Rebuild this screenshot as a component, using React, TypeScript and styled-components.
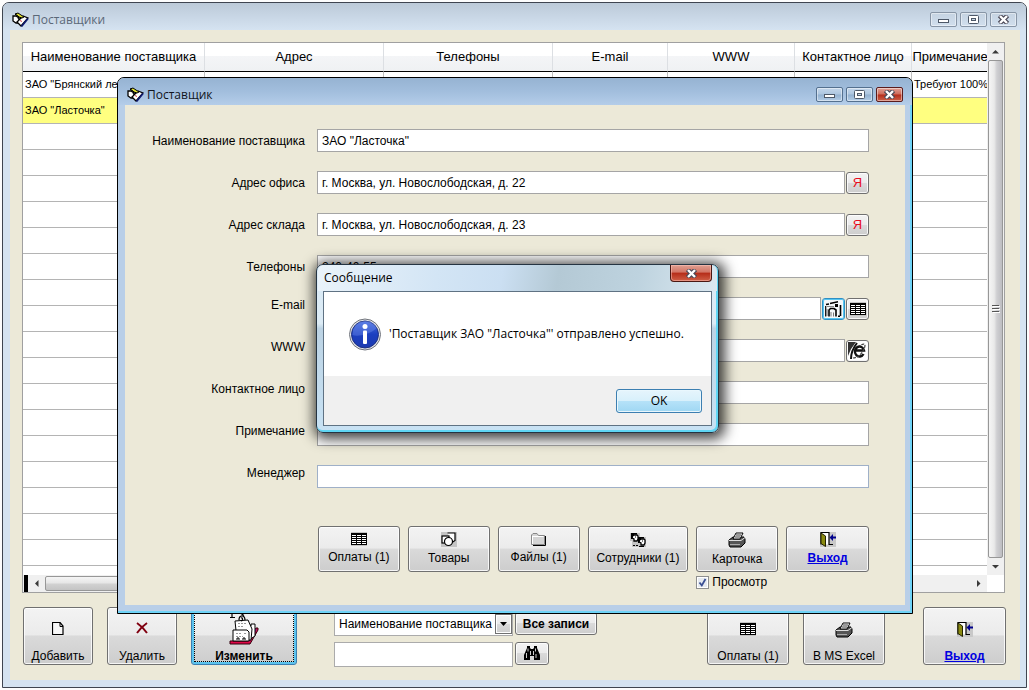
import React from "react";
import styled, { createGlobalStyle, css } from "styled-components";

const sans = `"Liberation Sans", Arial, sans-serif`;
const ui = `"Open Sans", "Noto Sans", sans-serif`;
const beige = "#ece9d8";

const GlobalStyle = createGlobalStyle`
  * { box-sizing: border-box; }
  body { margin: 0; background: #fdfdfd; font: 12px/16px ${sans}; color: #000; }
  button, input, select { font: inherit; color: inherit; margin: 0; }
  svg { display: block; flex: none; }
`;

const Desktop = styled.div`
  position: relative;
  padding: 2px;
`;

const MainWindow = styled.main`
  border: 1px solid #3f4550;
  border-radius: 7px 7px 0 0;
  background: #d5e3f1;
  padding: 0 6px 7px 7px;
`;

const TitleBar = styled.header<{ $active?: boolean }>`
  display: flex;
  align-items: center;
  gap: 3px;
  height: 27px;
  margin: 0 -6px 0 -7px;
  padding: 6px 9px 0 9px;
  border-radius: 6px 6px 0 0;
  background: ${(p) =>
    p.$active
      ? "linear-gradient(#96b3d2, #a2bedd 50%, #b4cde9)"
      : "linear-gradient(#bccad8, #c8d6e5 50%, #d5e3f1)"};
  color: ${(p) => (p.$active ? "#10141c" : "#5b6878")};
`;

const Title = styled.h1`
  flex: 1;
  margin: 0;
  font: 12px/16px ${ui};
`;

const Captions = styled.div`
  display: flex;
  gap: 3px;
`;

const CaptionButton = styled.button<{ $danger?: boolean; $active?: boolean }>`
  display: flex;
  align-items: center;
  justify-content: center;
  width: 27px;
  height: 15px;
  padding: 0;
  border: 1px solid ${(p) => (p.$danger ? "#5a1c1c" : p.$active ? "#54708f" : "#8795a6")};
  border-radius: 2px;
  box-shadow: inset 0 0 0 1px rgba(255, 255, 255, 0.45);
  background: ${(p) =>
    p.$danger
      ? "linear-gradient(#dfa297, #cf6a59 48%, #b42d1b 52%, #cc6149)"
      : p.$active
        ? "linear-gradient(#c3d6ea, #adc6e0 48%, #93b1d0 52%, #b3cce6)"
        : "transparent"};
`;

const MainClient = styled.div`
  background: ${beige};
  padding: 12px 15px 13px 12px;
`;

const GridFrame = styled.section`
  display: grid;
  grid-template-columns: minmax(0, 1fr) 17px;
  grid-template-rows: 532px 17px;
  border: 1px solid #a0a0a0;
  background: #fff;
`;

const Table = styled.table`
  width: 100%;
  table-layout: fixed;
  border-collapse: separate;
  border-spacing: 0;
`;

const HeadCell = styled.th`
  height: 29px;
  padding: 0;
  border-right: 1px solid #dcdfe3;
  border-bottom: 1px solid #000;
  background: linear-gradient(#fff 45%, #f4f5f7 46%, #eff1f3);
  font: 13px/16px ${sans};
  white-space: nowrap;
  &:last-child { border-right: 0; }
`;

const Cell = styled.td`
  height: 26px;
  padding: 0 0 2px 2px;
  border-right: 1px solid #c0c0c0;
  border-bottom: 1px solid #b4b4b4;
  font-size: 11px;
  overflow: hidden;
  white-space: nowrap;
  &:last-child { border-right: 0; }
`;

const Row = styled.tr<{ $selected?: boolean }>`
  background: ${(p) => (p.$selected ? "#ffff80" : "#fff")};
  &:last-child td { border-bottom: 0; height: 9px; }
`;

const ScrollBar = styled.div<{ $horizontal?: boolean }>`
  display: flex;
  flex-direction: ${(p) => (p.$horizontal ? "row" : "column")};
  background: #f0f0f0;
`;

const ScrollArrow = styled.button`
  display: flex;
  align-items: center;
  justify-content: center;
  width: 17px;
  height: 17px;
  padding: 0;
  border: 0;
  background: transparent;
`;

const ScrollThumb = styled.div<{ $horizontal?: boolean }>`
  flex: 1;
  display: flex;
  align-items: center;
  justify-content: center;
  border: 1px solid #979797;
  border-radius: 2px;
  margin: ${(p) => (p.$horizontal ? "1px 0" : "0 1px")};
  background: ${(p) =>
    p.$horizontal
      ? "linear-gradient(#f5f5f5, #e6e6e6 48%, #d2d2d2 52%, #c4c4c4)"
      : "linear-gradient(90deg, #f5f5f5, #e9e9e9 40%, #cfcfd2 60%, #bdbdc1)"};
`;

const ScrollTail = styled.div`
  width: 80px;
`;

const Splitter = styled.div`
  width: 4px;
  margin-left: 1px;
  background: #000;
`;

const buttonFace = css`
  border: 1px solid #707070;
  border-radius: 3px;
  box-shadow: inset 0 0 0 1px rgba(255, 255, 255, 0.8);
  background: linear-gradient(#f3f3f3, #ebebeb 48%, #dadada 50%, #cdcdcd);
`;

const Toolbar = styled.div`
  display: flex;
  align-items: flex-start;
  gap: 14px;
  margin: 14px -1px 0 1px;
`;

const ToolButton = styled.button<{ $w: number; $focused?: boolean; $push?: boolean }>`
  ${buttonFace}
  display: flex;
  flex-direction: column;
  align-items: center;
  justify-content: space-between;
  width: ${(p) => p.$w}px;
  height: 58px;
  padding: 14px 0 0;
  ${(p) => p.$push && "margin-left: auto;"}
  ${(p) =>
    p.$focused &&
    css`
      padding-top: 3px;
      border-color: #3c7fb1;
      box-shadow: inset 0 0 0 2px #5cc4ee;
      outline: 1px dotted #000;
      outline-offset: -4px;
      font-weight: bold;
    `}
`;

const ExitSlot = styled.div`
  margin-left: 24px;
`;

const ExitText = styled.span`
  color: #0000e0;
  font-weight: bold;
  text-decoration: underline;
`;

const Search = styled.form`
  display: grid;
  grid-template-columns: 179px 82px;
  column-gap: 2px;
  row-gap: 6px;
  align-items: start;
  margin: 5px 0 0 23px;
`;

const SelectBox = styled.label`
  position: relative;
  display: block;
`;

const Select = styled.select`
  appearance: none;
  width: 100%;
  height: 24px;
  padding: 0 18px 0 4px;
  border: 1px solid #ababab;
  border-radius: 0;
  background: #fff;
  overflow: hidden;
`;

const DropArrow = styled.span`
  position: absolute;
  top: 2px;
  right: 1px;
  display: flex;
  align-items: center;
  justify-content: center;
  width: 17px;
  height: 20px;
  border: 1px solid #707070;
  box-shadow: inset 0 0 0 1px #fff;
  background: linear-gradient(#f3f3f3, #ebebeb 48%, #dadada 50%, #cdcdcd);
  pointer-events: none;
`;

const SearchInput = styled.input`
  width: 100%;
  height: 25px;
  padding: 0 4px;
  border: 1px solid #ababab;
  background: #fff;
`;

const SmallButton = styled.button<{ $w?: number }>`
  ${buttonFace}
  display: flex;
  align-items: center;
  justify-content: center;
  width: ${(p) => p.$w ?? 82}px;
  height: 23px;
  padding: 0;
  font-weight: bold;
  white-space: nowrap;
`;

const CardWindow = styled.section`
  position: absolute;
  top: 77px;
  left: 117px;
  width: 796px;
  border: 1px solid #000;
  border-radius: 7px 7px 0 0;
  background: #b9cfe8;
  box-shadow: inset -2px -2px 0 #6fd3f7;
  padding: 0 7px 8px 7px;
`;

const CardTitleBar = styled(TitleBar)`
  margin-right: -7px;
`;

const CardClient = styled.form`
  background: ${beige};
  height: 500px;
  padding: 24px 36px 0 0;
`;

const Fields = styled.div`
  display: flex;
  flex-direction: column;
  gap: 19px;
`;

const Field = styled.div`
  display: flex;
  align-items: center;
  gap: 1px;
  height: 23px;
`;

const FieldLabel = styled.label<{ $raised?: boolean }>`
  width: 191px;
  padding-right: 11px;
  padding-bottom: ${(p) => (p.$raised ? 8 : 0)}px;
  text-align: right;
`;

const FieldInput = styled.input<{ $blue?: boolean }>`
  flex: 1;
  min-width: 0;
  height: 23px;
  padding: 0 4px;
  border: 1px solid ${(p) => (p.$blue ? "#9fb0c8" : "#a5a5a5")};
  border-radius: 0;
  background: #fff;
`;

const IconButton = styled.button<{ $focused?: boolean }>`
  ${buttonFace}
  display: flex;
  align-items: center;
  justify-content: center;
  width: 23px;
  height: 22px;
  padding: 0;
  color: #e80c1c;
  font-size: 13px;
  ${(p) =>
    p.$focused &&
    css`
      border-color: #2f8fc4;
      box-shadow: inset 0 0 0 1px #58c6f0;
      background: #f4f8fa;
    `}
`;

const Actions = styled.div`
  display: grid;
  grid-template-columns: 82fr 82fr 82fr 101fr 82fr 83fr;
  column-gap: 8px;
  row-gap: 2px;
  margin: 38px 0 0 193px;
`;

const ActionButton = styled.button`
  ${buttonFace}
  display: flex;
  flex-direction: column;
  align-items: center;
  gap: 3px;
  height: 46px;
  padding: 5px 0 0;
  white-space: nowrap;
`;

const Preview = styled.label`
  grid-column: 5;
  display: flex;
  align-items: center;
  gap: 3px;
`;

const Tick = styled.input`
  appearance: none;
  width: 13px;
  height: 13px;
  border: 1px solid #8e8f8f;
  background: #fff;
  &:checked {
    background: #e6eaf0
      url("data:image/svg+xml,%3Csvg xmlns='http://www.w3.org/2000/svg' viewBox='0 0 11 11'%3E%3Cpath d='M2.5 5.5L4.8 8.5 8.5 2' fill='none' stroke='%233a4f93' stroke-width='1.8'/%3E%3C/svg%3E");
    box-shadow: inset 0 0 0 1px #fff;
  }
`;

const Message = styled.div`
  position: absolute;
  top: 264px;
  left: 316px;
  width: 403px;
  padding: 0 6px 6px 6px;
  border: 1px solid #253442;
  border-radius: 7px;
  background: linear-gradient(180deg, #d9eaf6, #dcebf5 35%, #bcd3e4 38%, #c8e2f4);
  box-shadow: inset -1px -1px 0 1px #5fd6f4, 2px 2px 13px 4px rgba(0, 0, 0, 0.75);
`;

const MessageTitle = styled.header`
  display: flex;
  align-items: flex-start;
  justify-content: space-between;
  height: 26px;
  margin: 0 -5px;
  padding: 0 5px 0 6px;
  border-radius: 6px 6px 0 0;
  background: linear-gradient(100deg, #eaf3fa, #d3e5f5 30%, #cbdff2 46%, #b4c9d5 60%, #bed3df 80%, #dbe8f0);
`;

const MessageName = styled.h2`
  margin: 0;
  padding-top: 4px;
  font: 12px/18px ${ui};
`;

const MessageClose = styled.button`
  display: flex;
  align-items: center;
  justify-content: center;
  width: 42px;
  height: 17px;
  padding: 0;
  border: 1px solid #4a1712;
  border-top: 0;
  border-radius: 0 0 4px 4px;
  box-shadow: inset 0 0 0 1px rgba(255, 200, 190, 0.5);
  background: linear-gradient(#e0a193, #d27464 45%, #b52c18 50%, #cf6047);
`;

const MessageBody = styled.div`
  border: 1px solid #5f7283;
  background: #f0f0f0;
`;

const MessageText = styled.div`
  display: flex;
  align-items: center;
  gap: 8px;
  height: 84px;
  padding-left: 25px;
  background: #fff;
  font: 12px/16px ${ui};
  white-space: nowrap;
  p { margin: 0; }
`;

const MessageFooter = styled.div`
  display: flex;
  justify-content: flex-end;
  padding: 13px 9px 12px;
`;

const OkButton = styled.button`
  width: 86px;
  height: 24px;
  padding: 0;
  border: 1px solid #3c7fb1;
  border-radius: 3px;
  box-shadow: inset 0 0 0 1px #e9f7fd;
  background: linear-gradient(#e6f5fc, #d8f0fb 48%, #b6e2f8 50%, #9fd7f3);
  font: 12px/16px ${ui};
`;

/* ---------- icons ---------- */

const BookIcon = () => (
  <svg width="17" height="16" viewBox="0 0 17 16">
    <path d="M1 4h3l3 2v5H4L1 9z" fill="#fff" stroke="#000" strokeWidth="1.3" />
    <path d="M5 10l6-6 5 2-7 8z" fill="#fff" stroke="#000" strokeWidth="1.3" />
    <path d="M9.500 14.500l6.500-8" stroke="#101a70" strokeWidth="1.800" />
    <path d="M8 8.500l2 1" stroke="#d04040" />
    <path d="M3 2l3-1 6 4-2 1-3-1z" fill="#e0e030" stroke="#000" />
    <path d="M3 2l4 3-1 2" fill="none" stroke="#000" />
  </svg>
);

const MinIcon = () => (
  <svg width="13" height="9" viewBox="0 0 13 9">
    <rect x="1.5" y="4.5" width="10" height="3" fill="#fff" stroke="#4d5868" />
  </svg>
);
const MaxIcon = () => (
  <svg width="13" height="9" viewBox="0 0 13 9">
    <rect x="1.5" y=".5" width="10" height="8" rx="1" fill="#fff" stroke="#4d5868" />
    <rect x="4.5" y="3.5" width="4" height="2" fill="#c8d6e5" stroke="#4d5868" />
  </svg>
);
const CloseIcon = () => (
  <svg width="13" height="9" viewBox="0 0 13 9">
    <path d="M2.5 .5L10.500 8.500M10.500 .5L2.500 8.500" stroke="#4d4a58" strokeWidth="4.600" />
    <path d="M3 1L10 8M10 1L3 8" stroke="#fff" strokeWidth="2.400" />
  </svg>
);

const Arrow = ({ dir }: { dir: "up" | "down" | "left" | "right" }) => {
  const d = {
    up: "M0 5.500L3.500 2 7 5.500z",
    down: "M0 2L3.500 5.500 7 2z",
    left: "M5.500 0L2 3.500 5.500 7z",
    right: "M2 0L5.500 3.500 2 7z",
  }[dir];
  return (
    <svg width="7" height="7" viewBox="0 0 7 7">
      <path d={d} fill="#3a3a3a" />
    </svg>
  );
};

const TableIcon = () => (
  <svg width="16" height="14" viewBox="0 0 16 14" shapeRendering="crispEdges">
    <rect width="16" height="14" fill="#c4c4c4" />
    <rect y="1" width="16" height="12" fill="#000" />
    {[3, 5, 7, 9, 11].map((y) => (
      <path key={y} d={`M1 ${y}h4v1h-4zM6 ${y}h4v1h-4zM11 ${y}h4v1h-4z`} fill="#fff" />
    ))}
  </svg>
);

const PageIcon = () => (
  <svg width="12" height="14" viewBox="0 0 12 14">
    <path d="M.5 .5h7.500l3 3.500V12.500H.5z" fill="#f8f8f8" stroke="#000" strokeWidth="1.2" />
    <path d="M8 .5v4h3" fill="none" stroke="#000" />
  </svg>
);

const CrossIcon = () => (
  <svg width="12" height="12" viewBox="0 0 12 12">
    <path d="M1 1c3 2 7 6 10 10M11 1C8 3 4 7 1 11" fill="none" stroke="#800010" strokeWidth="2" />
  </svg>
);

const EditIcon = () => (
  <svg width="30" height="34" viewBox="0 0 30 34">
    <path d="M1 30h18l8-13h2v2L21 33H1z" fill="#e00848" stroke="#30000c" />
    <path d="M20 30l7-12" stroke="#7a2888" strokeWidth="2" />
    <path d="M19 15h3V13h4v12l-6 4z" fill="#fff" stroke="#000" />
    <path d="M6 10l13-1 4 9-1 11H8z" fill="#fff" stroke="#000" />
    <path d="M4 19h14l2 2v9H4z" fill="#fff" stroke="#000" />
    <path d="M9 12.500h8M9 15.500h6M7 22.500h5M7 25.500h7M15 22.500h3" stroke="#999" strokeDasharray="2 1" />
    <path d="M8 29v-2h2v2M14 29v-2h2v2" fill="none" stroke="#000" />
    <path d="M3 1v6M1 6.500h5M1 2.500h11l3 2" fill="none" stroke="#000" strokeWidth="1.2" />
    <path d="M10 9c0-5 6-6 6 0M12 7c2-1 2 3 0 3" fill="none" stroke="#000" strokeWidth="1.2" />
  </svg>
);

const ShapesIcon = () => (
  <svg width="16" height="15" viewBox="0 0 16 15">
    <rect width="16" height="15" fill="#c4c4c4" />
    <path d="M6.500 1h7.500v7.500l-3 2" fill="#fff" stroke="#000" strokeWidth="1.2" />
    <rect x="1" y="4" width="7" height="7" fill="#fff" stroke="#000" strokeWidth="1.200" />
    <circle cx="7.500" cy="9.500" r="4" fill="#fff" stroke="#000" strokeWidth="1.200" />
  </svg>
);

const FolderIcon = () => (
  <svg width="16" height="14" viewBox="0 0 16 14">
    <path d="M.5 12.500V3L2 1.500h4L7.500 3.500h6v9z" fill="#d4d4d4" stroke="#888" />
    <path d="M1.500 4.500h11M1.500 4v8" stroke="#fff" />
    <path d="M14.500 4v9.500H2" fill="none" stroke="#000" />
  </svg>
);

const PeopleIcon = () => (
  <svg width="16" height="15" viewBox="0 0 16 15">
    <path d="M0 1h10v4h6v10H2V9H0z" fill="#c4c4c4" />
    <path d="M3 3h4l1 1v3L7 9H4V7L2 6z" fill="#fff" stroke="#000" strokeWidth="1.300" />
    <path d="M1 1h6v1.500H4V4H2.500v3H1z" fill="#000" />
    <path d="M10 7h4l1 1v3l-1 2h-3v-2L9 10z" fill="#fff" stroke="#000" strokeWidth="1.300" />
    <path d="M8 5h6v1.500h-3V8H9.500v3H8z" fill="#000" />
    <path d="M5 5h1M12 9h1" stroke="#000" />
    <path d="M3 13.500h2M6 13.500h2M9 14.500h5" stroke="#000" />
  </svg>
);

const PrinterIcon = () => (
  <svg width="18" height="16" viewBox="0 0 18 16">
    <path d="M1 8l4-3h11l1 2v4l-4 4H2l-1-2z" fill="#555" stroke="#000" />
    <path d="M1 8.500h12l4-3" fill="none" stroke="#ddd" />
    <path d="M5 7l3-6h7l-3 6z" fill="#fff" stroke="#000" />
    <path d="M8 3h5M7 5h5" stroke="#000" strokeWidth=".8" />
    <path d="M2 12.500h10" stroke="#aaa" />
  </svg>
);

const ExitIcon = () => (
  <svg width="16" height="15" viewBox="0 0 16 15">
    <rect width="16" height="15" fill="#c8c8c8" />
    <path d="M1 12.500V.5h8v12h4" fill="#fff" stroke="#000" strokeWidth="1.200" />
    <path d="M1 1l4.500 3v10.500L1 11.500z" fill="#8a8a10" stroke="#222200" />
    <path d="M9.500 5.500L13 2v2.500h3v2h-3V9z" fill="#00008c" />
  </svg>
);

const BinocularsIcon = () => (
  <svg width="18" height="15" viewBox="0 0 18 15">
    <path d="M4 0h3v2l1 1h2l1-1V0h3v2l3 7v5h-6v-4H7v4H1V9l3-7z" fill="#000" />
    <path d="M5 2.500v3M12.500 2.500v3M3.500 7v5M10.500 5v4M13 8v4M7.500 5v4" stroke="#fff" strokeWidth=".8" />
  </svg>
);

const MailIcon = () => (
  <svg width="17" height="16" viewBox="0 0 17 16">
    <path d="M1 3.500L4 3M5 2.500L13 .8" stroke="#000" strokeWidth="1.400" />
    <path d="M2 5.500h7" stroke="#888" />
    <path d="M.7 5v10.500" stroke="#000" strokeWidth="1.200" />
    <path d="M4 15.500V9l1.500-1.500H9L11 9v6.500" fill="none" stroke="#000" strokeWidth="1.600" />
    <path d="M6 15.500V11M8.500 15.500v-4M2 8v7" stroke="#777" />
    <rect x="10" y="3" width="3" height="3" fill="#000" />
    <path d="M15.500 4v11M13 15.300h2" stroke="#000" strokeWidth="1.600" />
  </svg>
);

const BrowserIcon = () => (
  <svg width="19" height="18" viewBox="0 0 19 18">
    <rect width="19" height="18" fill="#fff" />
    <path d="M0 0h8L3 7 0 14z" fill="#333" />
    <path d="M9 1C5 6 3 11 3 17" fill="none" stroke="#111" strokeWidth="2" />
    <path d="M15.500 12a4.600 5 0 1 1 .5-3.500H7" fill="none" stroke="#111" strokeWidth="2.400" />
    <path d="M5 16c6 0 12-8 12-13-1-2-4 0-6 1" fill="none" stroke="#444" strokeWidth="1.200" strokeDasharray="3 1" />
  </svg>
);

const InfoIcon = () => (
  <svg width="32" height="33" viewBox="0 0 32 33">
    <defs>
      <linearGradient id="info" x1="0" y1="0" x2="0" y2="1">
        <stop offset="0" stopColor="#4a6fe0" />
        <stop offset=".5" stopColor="#1c3fc0" />
        <stop offset="1" stopColor="#1c3ab0" />
      </linearGradient>
    </defs>
    <circle cx="16" cy="16.500" r="15.500" fill="#e4e4e8" stroke="#70747c" />
    <circle cx="16" cy="16.500" r="13.500" fill="url(#info)" stroke="#1c2f80" />
    <path d="M3.500 17C8 19 20 17 28 10A13 13 0 0 0 4 12z" fill="#7d9bf0" opacity=".35" />
    <circle cx="16" cy="8.500" r="2.500" fill="#fff" />
    <rect x="14" y="12.500" width="4" height="13.500" rx="1" fill="#fff" />
  </svg>
);

/* ---------- page ---------- */

const columns: [string, number][] = [
  ["Наименование поставщика", 182],
  ["Адрес", 179],
  ["Телефоны", 169],
  ["E-mail", 115],
  ["WWW", 127],
  ["Контактное лицо", 117],
  ["Примечание", 76],
];

const suppliers = [
  { name: 'ЗАО "Брянский лес"', note: "Требуют 100%" },
  { name: 'ЗАО "Ласточка"', note: "", selected: true },
];

const rows = [...suppliers, ...Array.from({ length: 18 }, () => ({ name: "", note: "", selected: false }))];

const WindowControls = ({ active }: { active?: boolean }) => (
  <Captions>
    <CaptionButton type="button" aria-label="Свернуть" $active={active}><MinIcon /></CaptionButton>
    <CaptionButton type="button" aria-label="Развернуть" $active={active}><MaxIcon /></CaptionButton>
    <CaptionButton type="button" aria-label="Закрыть" $active={active} $danger={active}><CloseIcon /></CaptionButton>
  </Captions>
);

type FieldRowProps = {
  id: string;
  label: string;
  value?: string;
  raised?: boolean;
  blue?: boolean;
  children?: React.ReactNode;
};

const FieldRow = ({ id, label, value = "", raised, blue, children }: FieldRowProps) => (
  <Field>
    <FieldLabel htmlFor={id} $raised={raised}>{label}</FieldLabel>
    <FieldInput id={id} defaultValue={value} $blue={blue} />
    {children}
  </Field>
);

export default function App() {
  return (
    <Desktop>
      <GlobalStyle />
      <MainWindow>
        <TitleBar>
          <BookIcon />
          <Title>Поставщики</Title>
          <WindowControls />
        </TitleBar>
        <MainClient>
          <GridFrame>
            <Table>
              <colgroup>
                {columns.map(([name, width]) => <col key={name} width={width} />)}
              </colgroup>
              <thead>
                <tr>{columns.map(([name]) => <HeadCell key={name} scope="col">{name}</HeadCell>)}</tr>
              </thead>
              <tbody>
                {rows.map((row, i) => (
                  <Row key={i} $selected={row.selected}>
                    <Cell>{row.name}</Cell>
                    <Cell /><Cell /><Cell /><Cell /><Cell />
                    <Cell>{row.note}</Cell>
                  </Row>
                ))}
              </tbody>
            </Table>
            <ScrollBar>
              <ScrollArrow type="button" aria-label="Вверх"><Arrow dir="up" /></ScrollArrow>
              <ScrollThumb>
                <svg width="8" height="10" viewBox="0 0 8 10">
                  <path d="M0 1.500h7M0 4.500h7M0 7.500h7" stroke="#555" />
                  <path d="M1 2.500h7M1 5.500h7M1 8.500h7" stroke="#fff" />
                </svg>
              </ScrollThumb>
              <ScrollArrow type="button" aria-label="Вниз"><Arrow dir="down" /></ScrollArrow>
            </ScrollBar>
            <ScrollBar $horizontal>
              <Splitter />
              <ScrollArrow type="button" aria-label="Влево"><Arrow dir="left" /></ScrollArrow>
              <ScrollThumb $horizontal />
              <ScrollTail />
              <ScrollArrow type="button" aria-label="Вправо"><Arrow dir="right" /></ScrollArrow>
            </ScrollBar>
          </GridFrame>

          <Toolbar>
            <ToolButton type="button" $w={70}><PageIcon />Добавить</ToolButton>
            <ToolButton type="button" $w={70}><CrossIcon />Удалить</ToolButton>
            <ToolButton type="button" $w={106} $focused><EditIcon />Изменить</ToolButton>
            <Search>
              <SelectBox>
                <Select aria-label="Поле поиска">
                  <option>Наименование поставщика</option>
                </Select>
                <DropArrow>
                  <svg width="7" height="4" viewBox="0 0 7 4"><path d="M0 0h7L3.500 4z" /></svg>
                </DropArrow>
              </SelectBox>
              <SmallButton type="button">Все записи</SmallButton>
              <SearchInput aria-label="Строка поиска" />
              <SmallButton type="button" $w={34} aria-label="Найти"><BinocularsIcon /></SmallButton>
            </Search>
            <ToolButton type="button" $w={82} $push><TableIcon />Оплаты (1)</ToolButton>
            <ToolButton type="button" $w={82}><PrinterIcon />В MS Excel</ToolButton>
            <ExitSlot>
              <ToolButton type="button" $w={83}><ExitIcon /><ExitText>Выход</ExitText></ToolButton>
            </ExitSlot>
          </Toolbar>
        </MainClient>
      </MainWindow>

      <CardWindow aria-label="Поставщик">
        <CardTitleBar $active>
          <BookIcon />
          <Title as="h2">Поставщик</Title>
          <WindowControls active />
        </CardTitleBar>
        <CardClient>
          <Fields>
            <FieldRow id="name" label="Наименование поставщика" value={'ЗАО "Ласточка"'} />
            <FieldRow id="office" label="Адрес офиса" value="г. Москва, ул. Новослободская, д. 22">
              <IconButton type="button">Я</IconButton>
            </FieldRow>
            <FieldRow id="store" label="Адрес склада" value="г. Москва, ул. Новослободская, д. 23">
              <IconButton type="button">Я</IconButton>
            </FieldRow>
            <FieldRow id="phones" label="Телефоны" value="240-40-55" />
            <FieldRow id="email" label="E-mail" raised>
              <IconButton type="button" aria-label="Написать письмо" $focused><MailIcon /></IconButton>
              <IconButton type="button" aria-label="Список писем"><TableIcon /></IconButton>
            </FieldRow>
            <FieldRow id="www" label="WWW" raised>
              <IconButton type="button" aria-label="Открыть сайт"><BrowserIcon /></IconButton>
            </FieldRow>
            <FieldRow id="contact" label="Контактное лицо" raised />
            <FieldRow id="note" label="Примечание" raised />
            <FieldRow id="manager" label="Менеджер" raised blue />
          </Fields>
          <Actions>
            <ActionButton type="button"><TableIcon />Оплаты (1)</ActionButton>
            <ActionButton type="button"><ShapesIcon />Товары</ActionButton>
            <ActionButton type="button"><FolderIcon />Файлы (1)</ActionButton>
            <ActionButton type="button"><PeopleIcon />Сотрудники (1)</ActionButton>
            <ActionButton type="button"><PrinterIcon />Карточка</ActionButton>
            <ActionButton type="button"><ExitIcon /><ExitText>Выход</ExitText></ActionButton>
            <Preview><Tick type="checkbox" defaultChecked />Просмотр</Preview>
          </Actions>
        </CardClient>
      </CardWindow>

      <Message role="dialog" aria-labelledby="message-title">
        <MessageTitle>
          <MessageName id="message-title">Сообщение</MessageName>
          <MessageClose type="button" aria-label="Закрыть сообщение"><CloseIcon /></MessageClose>
        </MessageTitle>
        <MessageBody>
          <MessageText>
            <InfoIcon />
            <p>'Поставщик ЗАО "Ласточка"' отправлено успешно.</p>
          </MessageText>
          <MessageFooter><OkButton type="button">OK</OkButton></MessageFooter>
        </MessageBody>
      </Message>
    </Desktop>
  );
}
